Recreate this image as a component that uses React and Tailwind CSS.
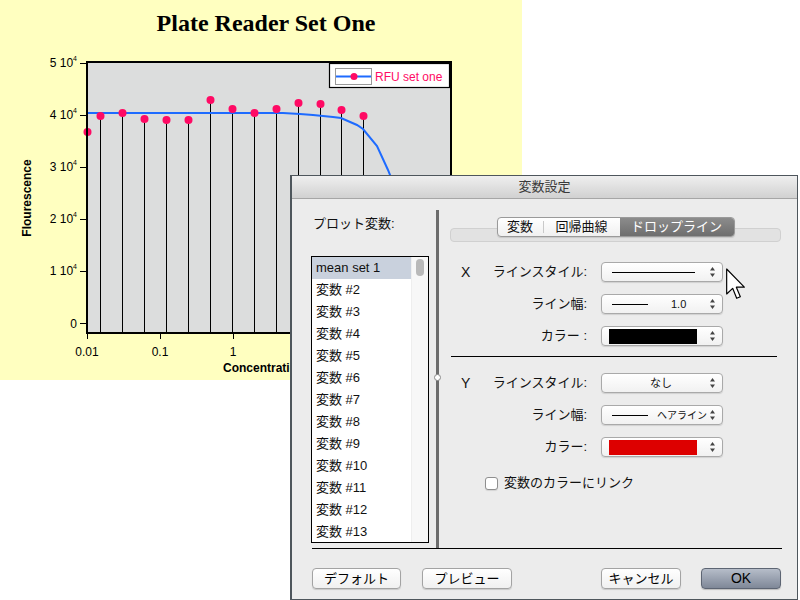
const points = [
  [87, 132], [100, 116], [122, 113], [144, 119], [166, 120], [188, 120], [210, 100],
  [232, 109], [254, 113], [276, 109], [298, 103], [320, 104], [341, 110], [363, 116],
];

const curve = [
  [87, 113], [283, 113], [300, 114], [313, 115], [333, 117], [341, 118], [357, 125],
  [363, 129], [377, 146], [388, 170], [398, 195], [410, 240], [425, 290], [440, 318], [451, 322],
];

const yTicks = [
  [63, "5"], [115, "4"], [167, "3"], [219, "2"], [271, "1"],
];

const Chart = () => {
  return (
    <svg width="522" height="334" viewBox="0 46 522 334" fontFamily="Liberation Sans, Arial, sans-serif">
      <rect x="87" y="62" width="364" height="271" fill="#DCDDDD" />
      {points.map(([x, y], i) => (
        <line key={"d" + i} x1={x + 0.5} y1={y} x2={x + 0.5} y2={333} stroke="#000" strokeWidth="1" />
      ))}
      <polyline points={curve.map((p) => p.join(",")).join(" ")} fill="none" stroke="#1E6BFF" strokeWidth="2" />
      {points.map(([x, y], i) => (
        <circle key={"p" + i} cx={x + 0.5} cy={y} r="4" fill="#FF0A64" />
      ))}
      <rect x="87" y="62" width="364" height="271" fill="none" stroke="#000" strokeWidth="2" />

      {/* legend */}
      <rect x="329.5" y="63.5" width="120" height="24" fill="#fff" stroke="#000" strokeWidth="1.2" />
      <rect x="335.5" y="68.5" width="36" height="16" fill="none" stroke="#000" strokeWidth="0.8" strokeDasharray="1 1" />
      <line x1="336" y1="76.5" x2="371" y2="76.5" stroke="#1E6BFF" strokeWidth="2" />
      <circle cx="354" cy="76.5" r="3.5" fill="#FF0A64" />
      <text x="375" y="81" fontSize="12" fill="#FF0A64">RFU set one</text>

      {/* y axis */}
      {yTicks.map(([y, n]) => (
        <g key={y}>
          <line x1="80" y1={y + 0.5} x2="86" y2={y + 0.5} stroke="#000" strokeWidth="1" />
          <text x="77" y={y + 4} fontSize="12" fill="#000" textAnchor="end">
            {n} 10<tspan fontSize="7" dy="-6">4</tspan>
          </text>
        </g>
      ))}
      <line x1="80" y1="323.5" x2="86" y2="323.5" stroke="#000" strokeWidth="1" />
      <text x="77" y="328" fontSize="12" fill="#000" textAnchor="end">0</text>
      <text x="31" y="198" fontSize="12" fontWeight="bold" fill="#000" textAnchor="middle" transform="rotate(-90 31 198)">
        Flourescence
      </text>

      {/* x axis */}
      {[87, 160, 233, 306, 379].map((x) => (
        <line key={x} x1={x + 0.5} y1="333" x2={x + 0.5} y2="339" stroke="#000" strokeWidth="1" />
      ))}
      <text x="87" y="356" fontSize="12" fill="#000" textAnchor="middle">0.01</text>
      <text x="160" y="356" fontSize="12" fill="#000" textAnchor="middle">0.1</text>
      <text x="233" y="356" fontSize="12" fill="#000" textAnchor="middle">1</text>
      <text x="306" y="356" fontSize="12" fill="#000" textAnchor="middle">10</text>
      <text x="223" y="372" fontSize="12" fontWeight="bold" fill="#000">Concentration</text>
    </svg>
  );
};

const Arrows = () => (
  <svg width="7" height="12" viewBox="0 0 7 12" className="shrink-0">
    <path d="M3.5 1 L6 4.5 L1 4.5 Z" fill="#444" />
    <path d="M3.5 11 L6 7.5 L1 7.5 Z" fill="#444" />
  </svg>
);

const Popup = ({ children }) => (
  <div className="w-[122px] h-[20px] rounded-[4px] border border-[#a9a9a9] bg-gradient-to-b from-white to-[#f1f1f1] shadow-[0_1px_1px_rgba(0,0,0,0.12)] flex items-center pl-[7px] pr-[6px]">
    <div className="flex-1 flex items-center h-full whitespace-nowrap">{children}</div>
    <Arrows />
  </div>
);

const Row = ({ axis, label, children }) => (
  <div className="flex items-center h-[20px]">
    <div className="w-[30px] text-[14px]">{axis}</div>
    <div className="w-[96px] text-right text-[13px] leading-[16px] whitespace-nowrap">{label}</div>
    <div className="ml-[14px]">
      <Popup>{children}</Popup>
    </div>
  </div>
);

const Button = ({ children, className = "" }) => (
  <button
    className={
      "h-[21px] rounded-[4px] border border-[#a3a3a3] bg-gradient-to-b from-white to-[#f0f0f0] shadow-[0_1px_1px_rgba(0,0,0,0.15)] text-[13px] leading-[19px] text-black " +
      className
    }
  >
    {children}
  </button>
);

const listItems = ["mean set 1"].concat(
  Array.from({ length: 12 }, (_, i) => "変数 #" + (i + 2))
);

const Dialog = () => {
  return (
    <div className="absolute left-[290px] top-[175px] w-[508px] h-[425px] border border-[#4e565c] border-l-2 bg-[#ECECEC] flex flex-col text-[#111]">
      <div className="h-[23px] shrink-0 bg-gradient-to-b from-[#EFEFEF] to-[#D1D1D1] border-b border-[#A6A6A6] text-center text-[13px] leading-[22px] text-[#3a3a3a]">
        変数設定
      </div>

      <div className="flex h-[349px] shrink-0 pl-[19px]">
        {/* left: plot variables */}
        <div className="w-[118px] flex flex-col">
          <div className="mt-[17px] h-[16px] text-[13px] leading-[16px] pl-[2px]">プロット変数:</div>
          <div className="mt-[24px] h-[287px] border border-black bg-white flex">
            <div className="flex-1 flex flex-col">
              {listItems.map((t, i) => (
                <div
                  key={t}
                  className={
                    "h-[22px] shrink-0 pl-[4px] text-[13px] leading-[22px] " + (i === 0 ? "bg-[#C9D1DD]" : "")
                  }
                >
                  {t}
                </div>
              ))}
            </div>
            <div className="w-[17px] bg-[#F7F7F7] border-l border-[#eeeeee] flex justify-center pt-[2px]">
              <div className="w-[8px] h-[17px] rounded-full bg-[#B9B9B9]" />
            </div>
          </div>
        </div>

        {/* divider */}
        <div className="ml-[7px] mt-[11px] w-[3px] bg-[#6c6c6c] relative">
          <div className="absolute left-[-2px] top-[164px] w-[7px] h-[7px] rounded-full bg-white border border-[#8a8a8a]" />
        </div>

        {/* right: settings */}
        <div className="ml-[11px] w-[331px] flex flex-col">
          <div className="mt-[18px] relative h-[25px]">
            <div className="absolute left-0 right-0 top-[11px] h-[14px] rounded-[4px] bg-[#E2E2E2] border border-[#D0D0D0]" />
            <div className="relative flex justify-center">
              <div className="flex h-[20px] rounded-[4px] border border-[#9a9a9a] overflow-hidden bg-gradient-to-b from-white to-[#f0f0f0] text-[13px] leading-[18px] shadow-[0_1px_1px_rgba(0,0,0,0.12)]">
                <div className="w-[45px] text-center">変数</div>
                <div className="w-[1px] my-[3px] bg-[#c9c9c9]" />
                <div className="w-[76px] text-center">回帰曲線</div>
                <div className="w-[114px] text-center text-white bg-gradient-to-b from-[#8c8c8c] to-[#6e6e6e]">ドロップライン</div>
              </div>
            </div>
          </div>

          <div className="mt-[20px] pl-[11px] flex flex-col gap-[12px]">
            <Row axis="X" label="ラインスタイル:">
              <div className="ml-[3px] w-[83px] h-px bg-black" />
            </Row>
            <Row axis="" label="ライン幅:">
              <div className="ml-[3px] w-[36px] h-px bg-black" />
              <span className="ml-[23px] text-[11px]">1.0</span>
            </Row>
            <Row axis="" label="カラー :">
              <div className="w-[88px] h-[15px] bg-black" />
            </Row>
          </div>

          <div className="mt-[10px] ml-[1px] w-[326px] h-px bg-black" />

          <div className="mt-[16px] pl-[11px] flex flex-col gap-[12px]">
            <Row axis="Y" label="ラインスタイル:">
              <span className="flex-1 text-center text-[11px] pl-[4px]">なし</span>
            </Row>
            <Row axis="" label="ライン幅:">
              <div className="ml-[3px] w-[36px] h-px bg-black" />
              <span className="ml-[9px] text-[10px]">ヘアライン</span>
            </Row>
            <Row axis="" label="カラー:">
              <div className="w-[88px] h-[15px] bg-[#DD0000]" />
            </Row>
          </div>

          <label className="mt-[18px] ml-[35px] flex items-center gap-[6px] text-[13px] leading-[16px]">
            <span className="w-[13px] h-[13px] rounded-[3px] border border-[#8f8f8f] bg-white shadow-[0_1px_1px_rgba(0,0,0,0.1)]" />
            変数のカラーにリンク
          </label>
        </div>
      </div>

      <div className="ml-[20px] w-[470px] h-px bg-black" />

      <div className="mt-[19px] ml-[20px] flex">
        <Button className="w-[89px]">デフォルト</Button>
        <Button className="w-[90px] ml-[21px]">プレビュー</Button>
        <Button className="w-[80px] ml-[89px]">キャンセル</Button>
        <button className="w-[80px] h-[21px] ml-[20px] rounded-[4px] border border-[#5d6573] bg-gradient-to-b from-[#b6bdc9] to-[#7f8898] shadow-[0_1px_1px_rgba(0,0,0,0.2)] text-[14px] leading-[19px] text-black">
          OK
        </button>
      </div>
    </div>
  );
};

const Cursor = () => (
  <svg className="absolute left-[725px] top-[267px]" width="20" height="34" viewBox="0 0 12 20">
    <path d="M1 1 L1 16 L4.6 12.6 L7 18.6 L9.2 17.7 L6.8 11.9 L11.6 11.9 Z" fill="#fff" stroke="#000" strokeWidth="0.7" strokeLinejoin="round" />
  </svg>
);

export default function App() {
  return (
    <div className="relative w-[800px] h-[600px] bg-white overflow-hidden font-['Liberation_Sans','Noto_Sans_CJK_JP',sans-serif]">
      <div className="w-[522px] h-[380px] bg-[#FFFFC0] flex flex-col">
        <h1 className="h-[46px] shrink-0 pt-[8px] pl-[10px] text-center font-['Liberation_Serif',serif] font-bold text-[24px] leading-[30px] text-black">
          Plate Reader Set One
        </h1>
        <Chart />
      </div>
      <Dialog />
      <Cursor />
    </div>
  );
}
